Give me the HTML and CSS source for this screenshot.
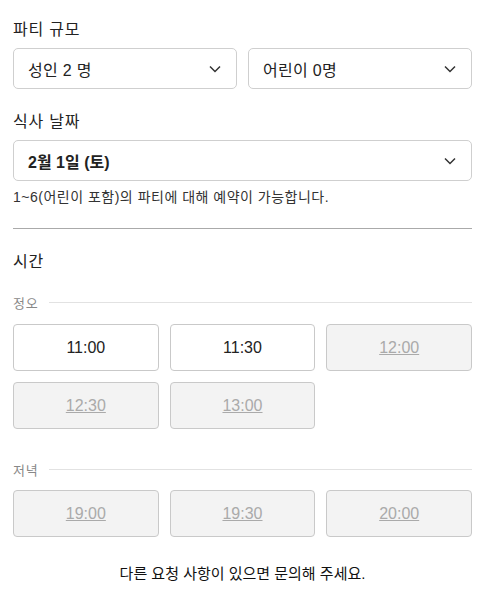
FILE: index.html
```html
<!DOCTYPE html>
<html lang="ko">
<head>
<meta charset="utf-8">
<link rel="stylesheet" href="styles.css">
</head>
<body>
<div class="page">
  <section class="field">
    <div class="label">파티 규모</div>
    <div class="row2">
      <div class="select"><span>성인 2 명</span><svg class="chev" viewBox="0 0 12 8"><path d="M1 1.5 6 6.5 11 1.5"/></svg></div>
      <div class="select"><span>어린이 0명</span><svg class="chev" viewBox="0 0 12 8"><path d="M1 1.5 6 6.5 11 1.5"/></svg></div>
    </div>
  </section>
  <section class="field date">
    <div class="label">식사 날짜</div>
    <div class="select"><span class="bold">2월 1일 (토)</span><svg class="chev" viewBox="0 0 12 8"><path d="M1 1.5 6 6.5 11 1.5"/></svg></div>
    <p class="help">1~6(어린이 포함)의 파티에 대해 예약이 가능합니다.</p>
  </section>
  <hr class="divider">
  <section class="time">
    <div class="label">시간</div>
    <div class="group-title"><span>정오</span></div>
    <div class="slots">
      <button class="slot">11:00</button>
      <button class="slot">11:30</button>
      <button class="slot off">12:00</button>
      <button class="slot off">12:30</button>
      <button class="slot off">13:00</button>
    </div>
    <div class="group-title evening"><span>저녁</span></div>
    <div class="slots">
      <button class="slot off">19:00</button>
      <button class="slot off">19:30</button>
      <button class="slot off">20:00</button>
    </div>
  </section>
  <p class="footer">다른 요청 사항이 있으면 문의해 주세요.</p>
</div>
</body>
</html>
```
FILE: styles.css
```css
html, body { margin: 0; padding: 0; background: #fff; }
body {
  font-family: "Liberation Sans", "Noto Sans CJK KR", sans-serif;
  color: #222;
}
.page { padding: 20px 15px 0 13px; }
.label { font-size: 16px; line-height: 20px; color: #222; margin-bottom: 8px; letter-spacing: 0.8px; }
.field { margin-bottom: 23px; }
.row2 { display: grid; grid-template-columns: 1fr 1fr; gap: 11px; }
.select {
  height: 41px; box-sizing: border-box;
  border: 1px solid #cfcfcf; border-radius: 5px;
  display: flex; align-items: center; justify-content: space-between;
  padding: 0 15px 0 14px;
  font-size: 16px; color: #222; letter-spacing: 0.3px;
}
.bold { font-weight: bold; letter-spacing: 0; }
.chev { width: 12px; height: 8px; fill: none; stroke: #333; stroke-width: 1.5; }
.field.date { margin-bottom: 0; }
.help { margin: 7px 0 0; font-size: 14px; line-height: 18px; color: #333; letter-spacing: 0.5px; }
.divider { border: 0; border-top: 1px solid #aaa; margin: 22px 0 23px; }
.time .label { margin-bottom: 21px; }
.group-title { display: flex; align-items: center; gap: 10px; font-size: 13px; color: #888; margin-bottom: 12px; letter-spacing: 0.8px; }
.group-title::after { content: ""; flex: 1; border-top: 1px solid #e2e2e2; }
.group-title.evening { margin-top: 31px; margin-bottom: 11px; }
.slots { display: grid; grid-template-columns: repeat(3, 1fr); gap: 11px; }
.slot {
  height: 47px; border: 1px solid #c9c9c9; border-radius: 4px; background: #fff;
  font-family: "Liberation Sans", "Noto Sans CJK KR", sans-serif;
  font-size: 16px; color: #222; padding: 0;
}
.slot.off { background: #f3f3f3; color: #aaa; text-decoration: underline; }
.footer { text-align: center; font-size: 15px; color: #111; margin: 25px 0 0; }
```
